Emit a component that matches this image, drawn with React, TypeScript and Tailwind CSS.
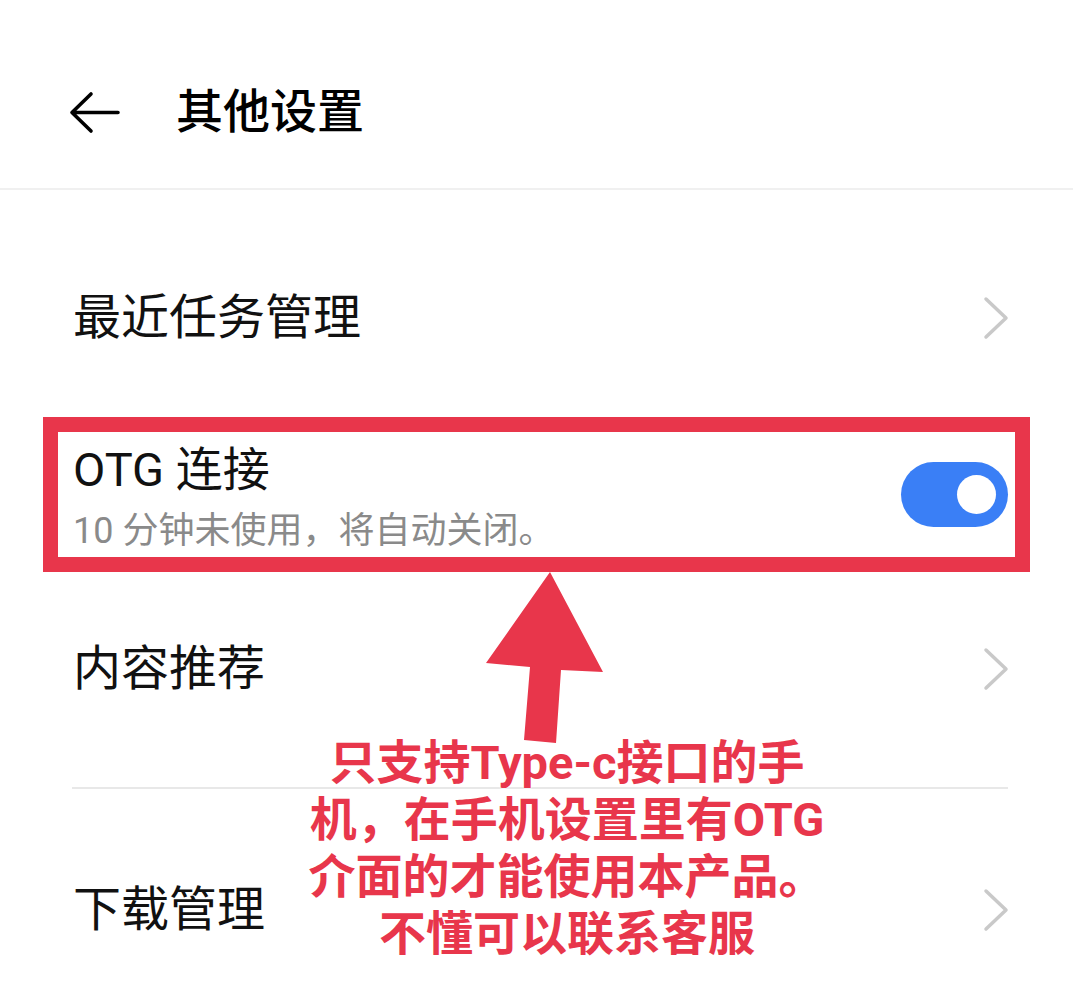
import React from "react";

const FONT = "font-['Roboto','Noto_Sans_CJK_SC',sans-serif]";

function Chevron() {
  return (
    <svg width="26" height="44" viewBox="0 0 26 44" className="shrink-0">
      <polyline
        points="3,3 23,22 3,41"
        fill="none"
        stroke="#c9c9c9"
        strokeWidth="3.5"
        strokeLinecap="round"
        strokeLinejoin="round"
      />
    </svg>
  );
}

function BackArrow() {
  return (
    <svg width="52" height="43" viewBox="0 0 52 43" className="shrink-0">
      <path
        d="M4 21.5 H50 M23 3 L4 21.5 L23 40"
        fill="none"
        stroke="#000"
        strokeWidth="3.6"
        strokeLinecap="round"
        strokeLinejoin="round"
      />
    </svg>
  );
}

function Row({ label, mt }: { label: string; mt: string }) {
  return (
    <div className={`flex h-[124px] items-center justify-between pl-[73px] pr-[64px] ${mt}`}>
      <span className="text-[48px] leading-[56px] text-[#111]">{label}</span>
      <Chevron />
    </div>
  );
}

export default function App() {
  return (
    <div className={`relative h-[1001px] w-[1073px] overflow-hidden bg-white ${FONT}`}>
      {/* Header */}
      <header className="flex h-[190px] items-center border-b-2 border-[#f0f0f0] pl-[68px] pt-[36px]">
        <BackArrow />
        <h1 className="ml-[56px] text-[47px] font-medium leading-[56px] text-black">其他设置</h1>
      </header>

      {/* List */}
      <Row label="最近任务管理" mt="mt-[66px]" />

      <div className="mx-[43px] mt-[37px] flex h-[155px] items-center justify-between border-[15px] border-[#e8364b] pl-[15px] pr-[7px]">
        <div className="flex flex-col self-start pt-[14px]">
          <span className="text-[47px] leading-[48px] text-[#111]">OTG 连接</span>
          <span className="mt-[19px] text-[36px] leading-[36px] text-[#8a8a8a]">
            10 分钟未使用，将自动关闭。
          </span>
        </div>
        <div className="flex h-[65px] w-[107px] items-center justify-end rounded-full bg-[#3a7ff6] pr-[12px]">
          <div className="h-[39px] w-[39px] rounded-full bg-white" />
        </div>
      </div>

      <Row label="内容推荐" mt="mt-[35px]" />

      <div className="ml-[72px] mr-[65px] mt-[56px] h-[2px] bg-[#e8e8e8]" />

      <Row label="下载管理" mt="mt-[59px]" />

      {/* Annotation arrow */}
      <svg
        className="absolute left-0 top-0"
        width="1073"
        height="1001"
        viewBox="0 0 1073 1001"
      >
        <polygon
          points="550,572 603,672 561,670 556,743 524,740 530,667 486,663"
          fill="#e8364b"
        />
      </svg>

      {/* Annotation text */}
      <div className="absolute left-[567px] top-[734px] -translate-x-1/2 whitespace-nowrap text-center text-[47px] font-bold leading-[57px] text-[#e8364b] [text-shadow:0_0_2px_#fff,0_0_3px_#fff]">
        只支持Type-c接口的手
        <br />
        机，在手机设置里有OTG
        <br />
        介面的才能使用本产品。
        <br />
        不懂可以联系客服
      </div>
    </div>
  );
}
